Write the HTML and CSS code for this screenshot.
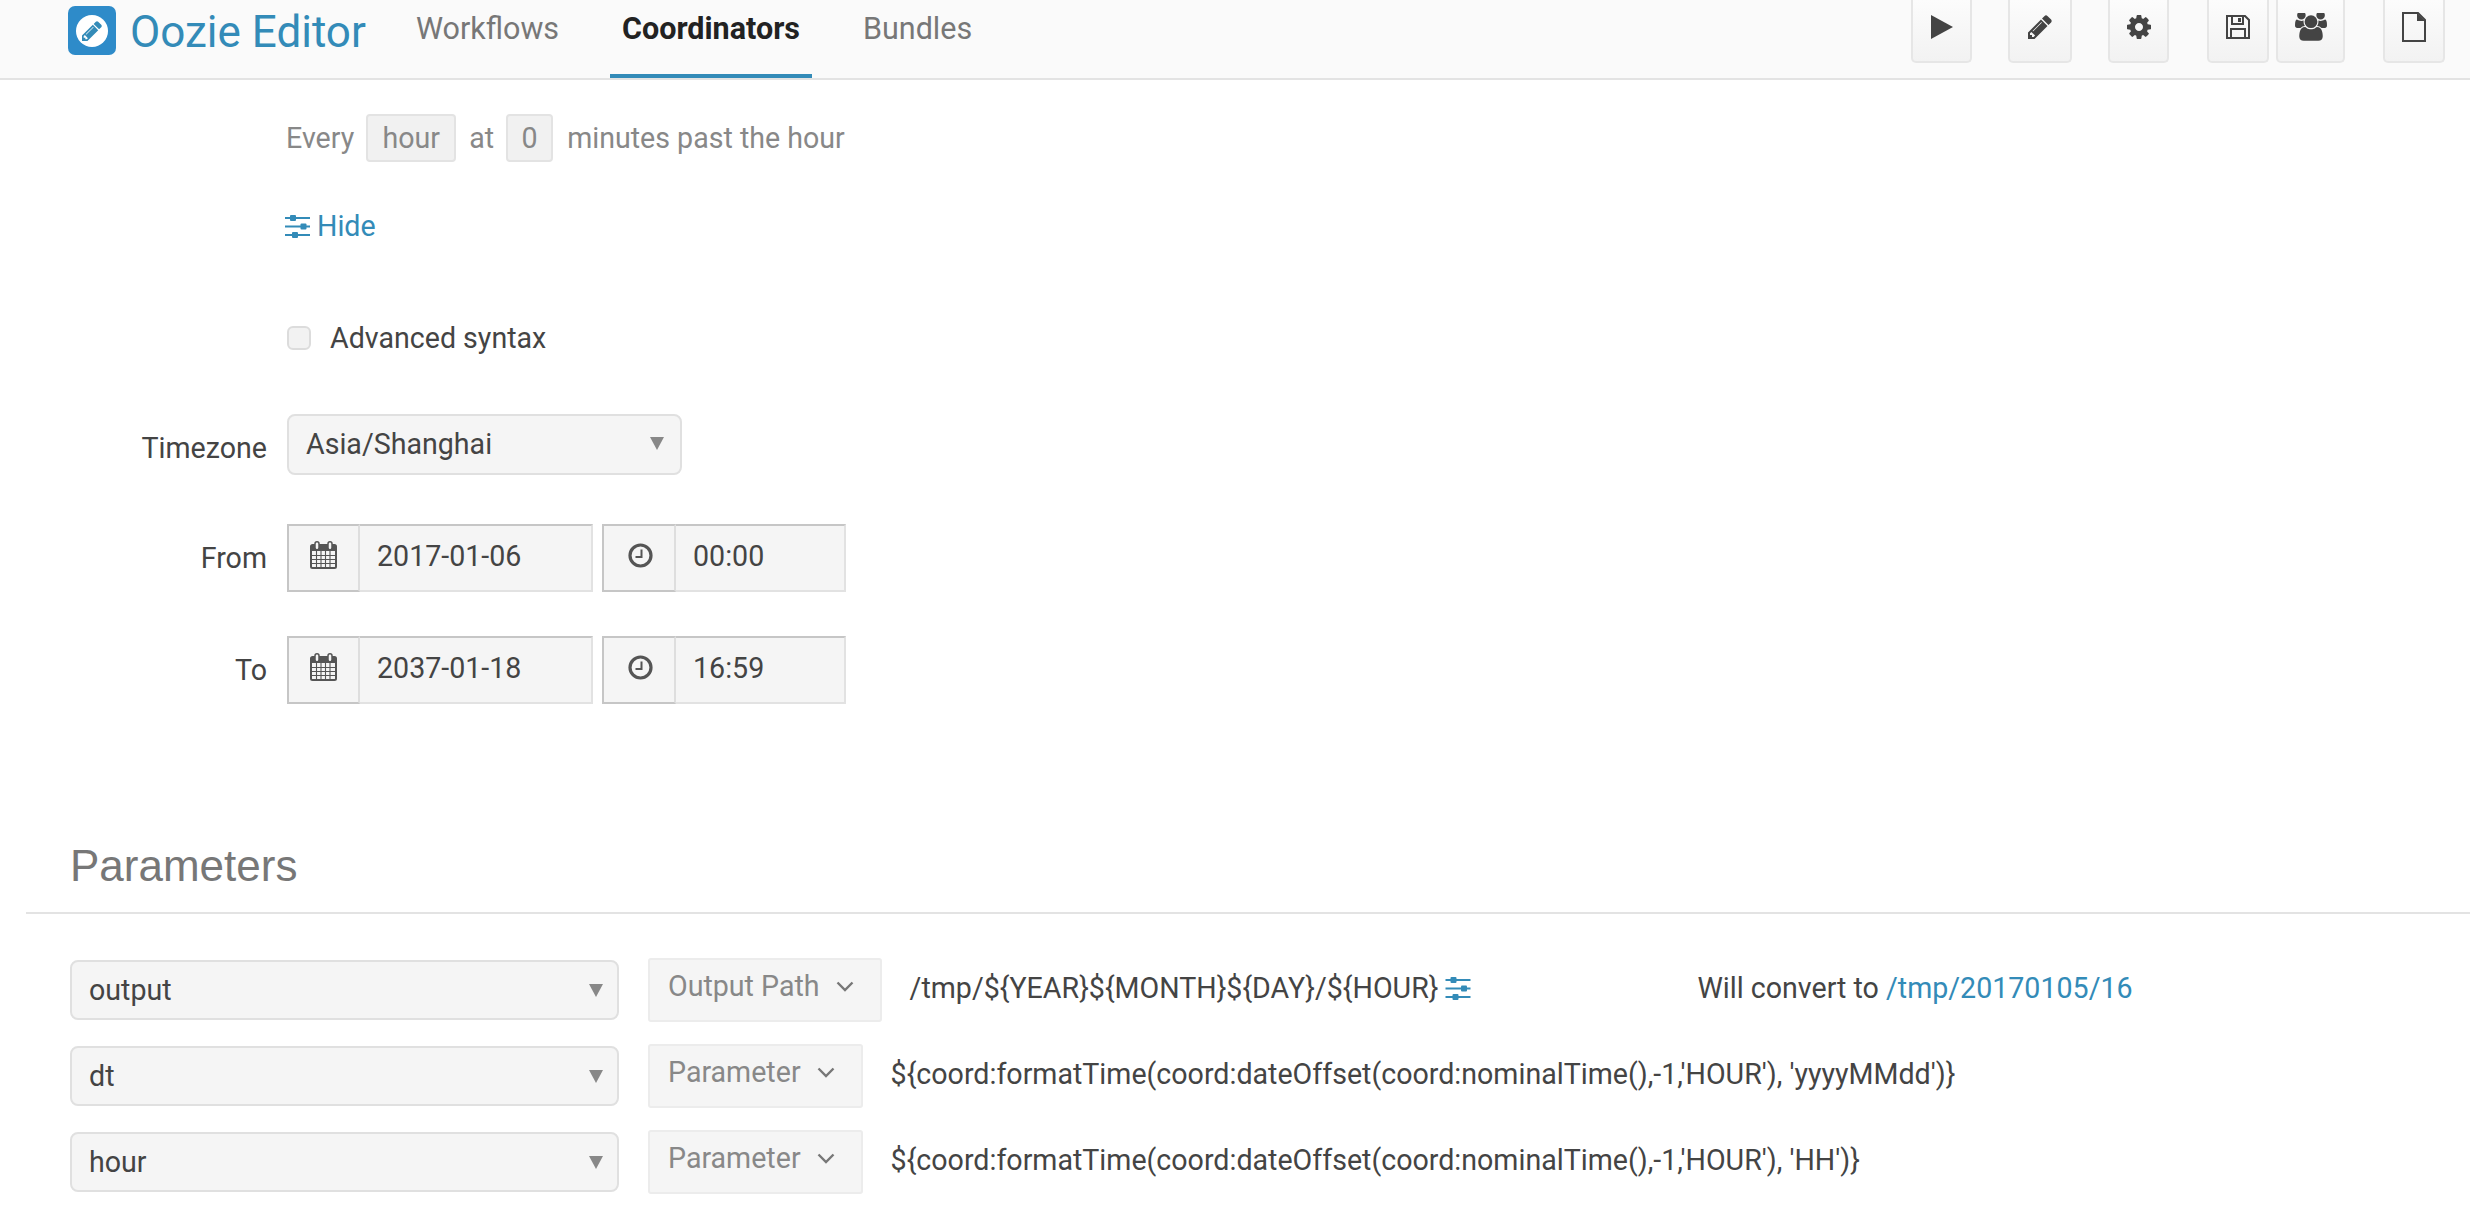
FILE: index.html
```html
<!DOCTYPE html>
<html lang="en">
<head>
<meta charset="utf-8">
<title>Oozie Editor</title>
<link rel="stylesheet" href="styles.css">
</head>
<body>
<svg class="sprite" xmlns="http://www.w3.org/2000/svg">
  <symbol id="i-sliders" viewBox="0 0 25 24">
    <path d="M0 4h25M0 12.500h25M0 21h25" stroke="currentColor" stroke-width="1.800" fill="none"/>
    <rect x="5" y="1" width="6" height="6" rx="1" fill="currentColor"/>
    <rect x="15.500" y="9.500" width="6" height="6" rx="1" fill="currentColor"/>
    <rect x="7" y="18" width="6" height="6" rx="1" fill="currentColor"/>
  </symbol>
  <symbol id="i-cal" viewBox="0 0 27 28">
    <path d="M1 5.500a1.500 1.500 0 0 1 1.500-1.500h22a1.500 1.500 0 0 1 1.500 1.500v20a1.500 1.500 0 0 1-1.500 1.500h-22a1.500 1.500 0 0 1-1.500-1.500z" fill="none" stroke="currentColor" stroke-width="2"/>
    <path d="M1 5h25v5H1z" fill="currentColor"/>
    <path d="M1 14.500h25M1 18.500h25M1 22.500h25M6.500 10v17M11 10v17M15.500 10v17M20 10v17" stroke="currentColor" stroke-width="1.100" fill="none"/>
    <rect x="5" y="0.800" width="4" height="8" rx="2" fill="#f5f5f5" stroke="currentColor" stroke-width="1.500"/>
    <rect x="18" y="0.800" width="4" height="8" rx="2" fill="#f5f5f5" stroke="currentColor" stroke-width="1.500"/>
  </symbol>
  <symbol id="i-clock" viewBox="0 0 25 25">
    <circle cx="12.500" cy="12.500" r="10.500" fill="none" stroke="currentColor" stroke-width="3.200"/>
    <path d="M13.500 6.500v7.500H7.500" fill="none" stroke="currentColor" stroke-width="2"/>
  </symbol>
</svg>

<header class="topbar">
  <a class="brand">
    <span class="brand-logo">
      <span class="brand-disc">
        <svg class="brand-glyph" viewBox="128 128 1536 1536"><path d="M491 1536l91-91-235-235-91 91v107h128v128h107zm523-928q0-22-22-22-10 0-17 7l-542 542q-7 7-7 17 0 22 22 22 10 0 17-7l542-542q7-7 7-17zm-54-192l416 416-832 832h-416v-416zm683 96q0 53-37 90l-166 166-416-416 166-165q36-38 90-38 53 0 91 38l235 234q37 39 37 91z"/></svg>
      </span>
    </span>
    <span class="brand-name">Oozie Editor</span>
  </a>
  <nav class="tabs">
    <a class="tab">Workflows</a>
    <a class="tab tab-active">Coordinators</a>
    <a class="tab">Bundles</a>
  </nav>
  <div class="tools">
    <button class="tool t-play"><svg class="ic-play" viewBox="0 0 22 24"><path d="M0 0l22 12L0 24z"/></svg></button>
    <button class="tool t-edit"><svg class="ic-s" viewBox="128 128 1536 1536"><path d="M491 1536l91-91-235-235-91 91v107h128v128h107zm523-928q0-22-22-22-10 0-17 7l-542 542q-7 7-7 17 0 22 22 22 10 0 17-7l542-542q7-7 7-17zm-54-192l416 416-832 832h-416v-416zm683 96q0 53-37 90l-166 166-416-416 166-165q36-38 90-38 53 0 91 38l235 234q37 39 37 91z"/></svg></button>
    <button class="tool t-cog"><svg class="ic-s" viewBox="128 128 1536 1536"><path d="M1152 896q0-106-75-181t-181-75-181 75-75 181 75 181 181 75 181-75 75-181zm512-109v222q0 12-8 23t-20 13l-185 28q-19 54-39 91 35 50 107 138 10 12 10 25t-9 23q-27 37-99 108t-94 71q-12 0-26-9l-138-108q-44 23-91 38-16 136-29 186-7 28-36 28h-222q-14 0-24.500-8.500t-11.500-21.500l-28-184q-49-16-90-37l-141 107q-10 9-25 9-14 0-25-11-126-114-165-168-7-10-7-23 0-12 8-23 15-21 51-66.500t54-70.500q-27-50-41-99l-183-27q-13-2-21-12.500t-8-23.500v-222q0-12 8-23t19-13l186-28q14-46 39-92-40-57-107-138-10-12-10-24 0-10 9-23 26-36 98.500-107.500t94.500-71.500q13 0 26 10l138 107q44-23 91-38 16-136 29-186 7-28 36-28h222q14 0 24.500 8.500t11.500 21.500l28 184q49 16 90 37l142-107q9-9 24-9 13 0 25 10 129 119 165 170 7 8 7 22 0 12-8 23-15 21-51 66.500t-54 70.500q26 50 41 98l183 28q13 2 21 12.500t8 23.500z"/></svg></button>
    <button class="tool t-save"><svg class="ic-s" viewBox="0 0 24 24"><path d="M1 1h18l4 4v18H1z" fill="none" stroke="#444" stroke-width="2"/><path d="M6 1v8h11V1" fill="none" stroke="#444" stroke-width="2"/><rect x="12" y="3" width="3" height="4" fill="#444"/><path d="M5 23v-9h14v9" fill="none" stroke="#444" stroke-width="2"/></svg></button>
    <button class="tool t-users"><svg class="ic-u" viewBox="0 128 1920 1664"><path d="M593 896q-162 5-265 128h-134q-82 0-138-40.500t-56-118.500q0-353 124-353 6 0 43.500 21t97.500 42.500 119 21.500q67 0 133-23-5 37-5 66 0 139 81 256zm1071 637q0 120-73 189.500t-194 69.500h-874q-121 0-194-69.500t-73-189.500q0-53 3.500-103.500t14-109 26.500-108.500 43-97.500 62-81 85.500-53.500 111.500-20q10 0 43 21.500t73 48 107 48 135 21.500 135-21.500 107-48 73-48 43-21.500q61 0 111.500 20t85.500 53.500 62 81 43 97.500 26.500 108.500 14 109 3.500 103.500zm-1024-1277q0 106-75 181t-181 75-181-75-75-181 75-181 181-75 181 75 75 181zm704 384q0 159-112.500 271.500t-271.500 112.500-271.500-112.500-112.500-271.500 112.500-271.500 271.500-112.500 271.500 112.500 112.500 271.500zm576 225q0 78-56 118.500t-138 40.500h-134q-103-123-265-128 81-117 81-256 0-29-5-66 66 23 133 23 59 0 119-21.500t97.500-42.500 43.500-21q124 0 124 353zm-128-609q0 106-75 181t-181 75-181-75-75-181 75-181 181-75 181 75 75 181z"/></svg></button>
    <button class="tool t-file"><svg class="ic-f" viewBox="0 0 24 30"><path d="M1 1h15l7 7v21H1z" fill="none" stroke="#444" stroke-width="2"/><path d="M15 1v8h8z" fill="#444"/></svg></button>
  </div>
</header>

<main>
  <div class="every">
    <span>Every</span><span class="chip chip-hour">hour</span><span>at</span><span class="chip chip-zero">0</span><span>minutes past the hour</span>
  </div>
  <a class="hide-link"><svg class="ic-sliders"><use href="#i-sliders"/></svg><span>Hide</span></a>
  <label class="check-row"><span class="checkbox"></span><span>Advanced syntax</span></label>

  <div class="field field-tz">
    <span class="field-label">Timezone</span>
    <div class="select select-tz"><span>Asia/Shanghai</span><i class="caret"></i></div>
  </div>

  <div class="field field-from">
    <span class="field-label">From</span>
    <div class="igroup igroup-date"><span class="addon"><svg class="ic-cal"><use href="#i-cal"/></svg></span><span class="ivalue">2017-01-06</span></div>
    <div class="igroup igroup-time"><span class="addon addon-time"><svg class="ic-clock"><use href="#i-clock"/></svg></span><span class="ivalue">00:00</span></div>
  </div>

  <div class="field field-to">
    <span class="field-label">To</span>
    <div class="igroup igroup-date"><span class="addon"><svg class="ic-cal"><use href="#i-cal"/></svg></span><span class="ivalue">2037-01-18</span></div>
    <div class="igroup igroup-time"><span class="addon addon-time"><svg class="ic-clock"><use href="#i-clock"/></svg></span><span class="ivalue">16:59</span></div>
  </div>

  <section class="params">
    <h2 class="params-title">Parameters</h2>
    <div class="param">
      <div class="select select-param"><span>output</span><i class="caret"></i></div>
      <div class="ptype"><span>Output Path</span><svg class="chev" viewBox="0 0 18 11"><path d="M1.500 1.500L9 9l7.500-7.500"/></svg></div>
      <div class="pvalue pvalue-path"><span>/tmp/${YEAR}${MONTH}${DAY}/${HOUR}</span><svg class="ic-sliders-s"><use href="#i-sliders"/></svg></div>
      <div class="convert">Will convert to <a class="link">/tmp/20170105/16</a></div>
    </div>
    <div class="param">
      <div class="select select-param"><span>dt</span><i class="caret"></i></div>
      <div class="ptype"><span>Parameter</span><svg class="chev" viewBox="0 0 18 11"><path d="M1.500 1.500L9 9l7.500-7.500"/></svg></div>
      <div class="pvalue"><span>${coord:formatTime(coord:dateOffset(coord:nominalTime(),-1,'HOUR'), 'yyyyMMdd')}</span></div>
    </div>
    <div class="param">
      <div class="select select-param"><span>hour</span><i class="caret"></i></div>
      <div class="ptype"><span>Parameter</span><svg class="chev" viewBox="0 0 18 11"><path d="M1.500 1.500L9 9l7.500-7.500"/></svg></div>
      <div class="pvalue"><span>${coord:formatTime(coord:dateOffset(coord:nominalTime(),-1,'HOUR'), 'HH')}</span></div>
    </div>
  </section>
</main>
</body>
</html>
```
FILE: styles.css
```css
* { box-sizing: border-box; }
html, body { margin: 0; padding: 0; }
body {
  width: 2470px;
  height: 1216px;
  overflow: hidden;
  background: #fff;
  color: #444;
  font-family: Roboto, "Liberation Sans", sans-serif;
  font-size: 28.6px;
  line-height: 40px;
}
.sprite { display: none; }

.topbar {
  display: flex;
  height: 80px;
  padding: 0 25px 0 68px;
  background: #fafafa;
  border-bottom: 2px solid #e3e3e3;
}
.brand { display: flex; align-items: flex-start; color: #338bb8; }
.brand-logo {
  display: flex;
  align-items: center;
  justify-content: center;
  width: 48px;
  height: 49px;
  margin-top: 6px;
  background: #2e8bc9;
  border-radius: 7px;
}
.brand-disc {
  display: flex;
  align-items: center;
  justify-content: center;
  width: 32px;
  height: 32px;
  border-radius: 50%;
  background: #fff;
}
.brand-glyph { width: 20px; height: 20px; fill: #338bb8; }
.brand-name { margin: 9px 0 0 14px; font-size: 44px; line-height: 46px; }

.tabs { display: flex; gap: 39px; margin-left: 38px; height: 78px; font-size: 30.5px; }
.tab {
  display: block;
  padding: 9px 12px 0;
  height: 78px;
  color: #777;
  border-bottom: 4px solid transparent;
}
.tab-active { color: #222; font-weight: 700; border-bottom-color: #338bb8; }

.tools { display: flex; margin-left: auto; height: 63px; }
.tool {
  display: flex;
  align-items: center;
  justify-content: center;
  height: 63px;
  padding: 0 0 7px;
  border: 2px solid #e6e6e6;
  border-top: 0;
  border-radius: 0 0 5px 5px;
  background: linear-gradient(#fcfcfc, #f2f2f2);
  fill: #444;
}
.t-play { width: 61px; }
.t-edit { width: 64px; margin-left: 36px; }
.t-cog { width: 61px; margin-left: 36px; }
.t-save { width: 62px; margin-left: 38px; }
.t-users { width: 69px; margin-left: 7px; }
.t-file { width: 62px; margin-left: 38px; }
.ic-play { width: 22px; height: 24px; }
.ic-s { width: 24px; height: 24px; }
.ic-u { width: 32px; height: 28px; }
.ic-f { width: 24px; height: 30px; }

.every {
  display: flex;
  align-items: center;
  height: 48px;
  margin: 34px 0 0 286px;
  color: #888;
}
.chip {
  display: block;
  height: 48px;
  line-height: 44px;
  text-align: center;
  background: #f1f1f1;
  border: 2px solid #e3e3e3;
  border-radius: 4px;
}
.chip-hour { width: 90px; margin: 0 13px 0 12px; }
.chip-zero { width: 47px; margin: 0 14px 0 12px; }

.hide-link {
  display: flex;
  align-items: center;
  height: 40px;
  margin: 44px 0 0 285px;
  color: #338bb8;
}
.ic-sliders { width: 25px; height: 24px; margin-right: 7px; color: #338bb8; }

.check-row {
  display: flex;
  align-items: center;
  height: 40px;
  margin: 72px 0 0 287px;
}
.checkbox {
  width: 24px;
  height: 24px;
  margin-right: 19px;
  background: #f2f2f2;
  border: 2px solid #dcdcdc;
  border-radius: 6px;
}

.field { display: flex; align-items: center; }
.field-tz { margin-top: 56px; }
.field-from { margin-top: 49px; }
.field-to { margin-top: 44px; }
.field-label { width: 267px; margin-right: 20px; text-align: right; }
.field-tz .field-label { padding-top: 6px; }

.select {
  display: flex;
  align-items: center;
  justify-content: space-between;
  background: #f5f5f5;
  border: 2px solid #e0e0e0;
  border-radius: 8px;
}
.select-tz { width: 395px; height: 61px; padding: 0 16px 2px 17px; }
.select-param { width: 549px; height: 60px; padding: 0 14px 0 17px; }
.caret {
  display: block;
  width: 0;
  height: 0;
  border-left: 7px solid transparent;
  border-right: 7px solid transparent;
  border-top: 13px solid #888;
}

.igroup { display: flex; height: 68px; background: #f5f5f5; }
.igroup-date { width: 306px; }
.igroup-time { width: 244px; margin-left: 9px; }
.addon {
  display: flex;
  flex: none;
  align-items: center;
  justify-content: center;
  width: 73px;
  padding-bottom: 6px;
  border: 2px solid #c6c6c6;
  border-right-color: #dedede;
  color: #555;
}
.addon-time { width: 74px; padding-left: 3px; }
.ivalue {
  flex: 1;
  padding: 10px 0 0 17px;
  border: 2px solid #e2e2e2;
  border-left: 0;
  border-top-color: #c6c6c6;
}
.ic-cal { width: 27px; height: 28px; }
.ic-clock { width: 25px; height: 25px; }

.params-title {
  display: flex;
  align-items: flex-end;
  height: 168px;
  margin: 42px 0 0 26px;
  padding: 0 0 22px 44px;
  color: #777;
  font-family: "Liberation Sans", Arial, sans-serif;
  font-size: 44px;
  font-weight: 400;
  line-height: 48px;
  border-bottom: 2px solid #e3e3e3;
}
.param { display: flex; align-items: center; height: 64px; margin: 22px 0 0 70px; }
.params-title + .param { margin-top: 44px; }
.ptype {
  display: flex;
  align-items: center;
  gap: 16px;
  height: 64px;
  margin-left: 29px;
  padding: 0 26px 8px 18px;
  color: #888;
  background: #f5f5f5;
  border: 2px solid #ececec;
  border-radius: 3px;
}
.chev { width: 18px; height: 11px; fill: none; stroke: #777; stroke-width: 2.400; }
.pvalue { display: flex; align-items: center; margin-left: 28px; padding-bottom: 4px; }
.ic-sliders-s { width: 26px; height: 24px; margin-left: 7px; color: #338bb8; }
.convert { margin-left: 226px; padding-bottom: 4px; }
.link { color: #338bb8; }
```
